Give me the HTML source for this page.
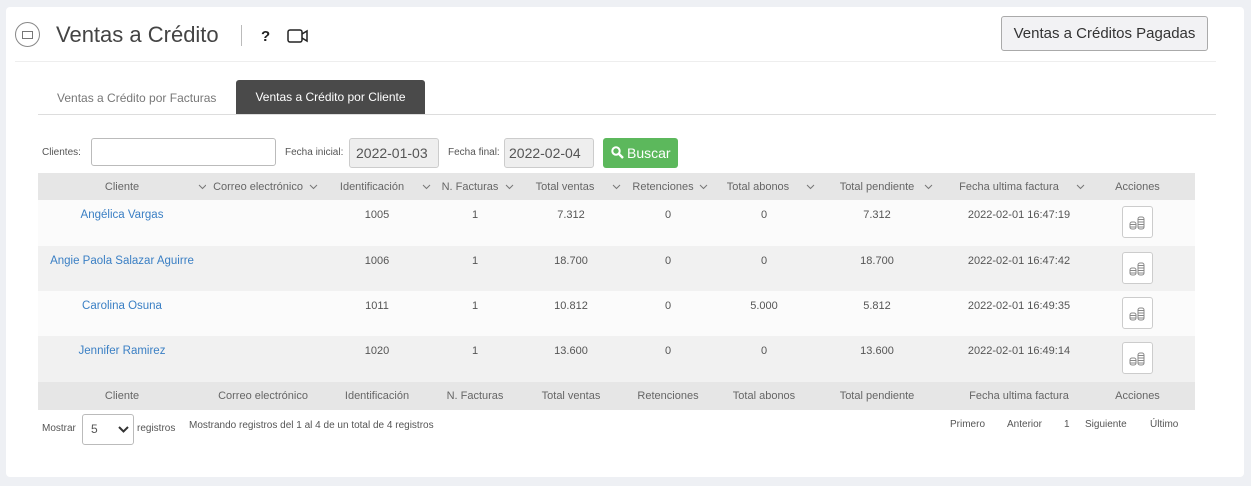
<!DOCTYPE html><html><head><meta charset="utf-8"><style>
*{box-sizing:border-box;margin:0;padding:0}
body{width:1251px;height:486px;background:#eef0f4;font-family:"Liberation Sans",sans-serif;color:#555;position:relative;overflow:hidden}
.card{position:absolute;left:6px;top:7px;width:1238px;height:470px;background:#fff;border-radius:4px}
.a{position:absolute}
table{position:absolute;left:38px;top:173px;border-collapse:collapse;table-layout:fixed;width:1157px}
td{font-size:11px;text-align:center;color:#555;vertical-align:top;position:relative}
tr.h td{height:27px;vertical-align:middle;background:#e6e6e6;color:#666}
tr.r td{padding-top:9px}
tr.o td{background:#fbfbfb}tr.e td{background:#f1f1f1}
.n{color:#3a7fc4;font-size:11.5px}
.btn{display:inline-block;width:31px;height:32px;border:1px solid #ccc;border-radius:3px;background:#fff;margin-top:-3px;margin-left:-23px;padding-top:9px}
.cv{position:absolute;top:9px;width:9px;height:9px}
.p{position:absolute;top:419px;font-size:10px}
</style></head><body>
<div class="card"></div>
<div class="a" style="left:15px;top:22px;width:25px;height:25px;border:1px solid #888;border-radius:50%"></div>
<div class="a" style="left:22px;top:31px;width:11px;height:8px;border:1px solid #777"></div>
<div class="a" style="left:56px;top:22px;font-size:22px;color:#444">Ventas a Crédito</div>
<div class="a" style="left:241px;top:25px;width:1px;height:21px;background:#bbb"></div>
<div class="a" style="left:261px;top:28px;font-size:15px;font-weight:bold;color:#222">?</div>
<svg class="a" style="left:287px;top:28px" width="22" height="16"><rect x="1" y="2" width="14" height="12" rx="2" fill="none" stroke="#222" stroke-width="1.5"/><path d="M15 6 L20 3 V13 L15 10" fill="none" stroke="#222" stroke-width="1.5"/></svg>
<div class="a" style="left:1001px;top:16px;width:207px;height:35px;border:1px solid #aaa;border-radius:3px;background:#f2f2f4;font-size:15px;color:#333;text-align:center;line-height:33px">Ventas a Créditos Pagadas</div>
<div class="a" style="left:15px;top:61px;width:1201px;height:1px;background:#eee"></div>
<div class="a" style="left:57px;top:91px;font-size:12px;color:#777">Ventas a Crédito por Facturas</div>
<div class="a" style="left:236px;top:80px;width:189px;height:35px;background:#4a4a4a;border-radius:3px 3px 0 0;color:#fff;font-size:12px;text-align:center;line-height:35px">Ventas a Crédito por Cliente</div>
<div class="a" style="left:38px;top:114px;width:1178px;height:1px;background:#ddd"></div>
<div class="a" style="left:42px;top:147px;font-size:10px">Clientes:</div>
<div class="a" style="left:91px;top:138px;width:185px;height:28px;border:1px solid #bbb;border-radius:3px"></div>
<div class="a" style="left:285px;top:147px;font-size:10px">Fecha inicial:</div>
<div class="a" style="left:349px;top:138px;width:90px;height:30px;border:1px solid #ccc;border-radius:3px;background:#eee;font-size:14px;line-height:28px;padding-left:6px">2022-01-03</div>
<div class="a" style="left:448px;top:147px;font-size:10px">Fecha final:</div>
<div class="a" style="left:504px;top:138px;width:90px;height:30px;border:1px solid #ccc;border-radius:3px;background:#eee;font-size:14px;line-height:28px;padding-left:4px">2022-02-04</div>
<div class="a" style="left:603px;top:138px;width:75px;height:30px;border-radius:3px;background:#5cb85c;color:#fff;font-size:14px;line-height:30px;padding-left:24px">Buscar</div>
<svg class="a" style="left:611px;top:146px" width="13" height="13"><circle cx="5" cy="5" r="3.7" fill="none" stroke="#fff" stroke-width="2"/><path d="M8 8 L12 12" stroke="#fff" stroke-width="2.4"/></svg>
<svg width="0" height="0" style="position:absolute"><defs><symbol id="c" viewBox="0 0 9 9"><path d="M1 3 L4.5 6.5 L8 3" fill="none" stroke="#777" stroke-width="1"/></symbol><symbol id="k" viewBox="0 0 16 14"><g fill="none" stroke="#888" stroke-width="1"><rect x="1" y="6" width="6" height="7" rx="2"/><path d="M1 8.5h6M1 11h6"/><rect x="9" y="1" width="6" height="12" rx="2"/><path d="M9 3.5h6M9 6h6M9 8.5h6M9 11h6"/></g></symbol></defs></svg>
<table>
<colgroup><col style="width:168px"><col style="width:114px"><col style="width:114px"><col style="width:82px"><col style="width:110px"><col style="width:84px"><col style="width:108px"><col style="width:118px"><col style="width:166px"><col style="width:93px"></colgroup>
<tr class="h"><td>Cliente<svg class="cv" style="left:160px"><use href="#c"/></svg></td><td style="padding-right:10px">Correo electrónico<svg class="cv" style="left:103px"><use href="#c"/></svg></td><td style="padding-right:10px">Identificación<svg class="cv" style="left:102px"><use href="#c"/></svg></td><td style="padding-right:10px">N. Facturas<svg class="cv" style="left:71px"><use href="#c"/></svg></td><td style="padding-right:12px">Total ventas<svg class="cv" style="left:96px"><use href="#c"/></svg></td><td style="padding-right:10px">Retenciones<svg class="cv" style="left:73px"><use href="#c"/></svg></td><td style="padding-right:12px">Total abonos<svg class="cv" style="left:96px"><use href="#c"/></svg></td><td style="padding-right:0">Total pendiente<svg class="cv" style="left:106px"><use href="#c"/></svg></td><td style="padding-right:20px">Fecha ultima factura<svg class="cv" style="left:140px"><use href="#c"/></svg></td><td style="padding-right:22px">Acciones</td></tr>
<tr class="r o" style="height:46px"><td class="n">Angélica Vargas</td><td></td><td>1005</td><td>1</td><td>7.312</td><td>0</td><td>0</td><td>7.312</td><td>2022-02-01 16:47:19</td><td><span class="btn"><svg width="16" height="14"><use href="#k"/></svg></span></td></tr>
<tr class="r e" style="height:45px"><td class="n">Angie Paola Salazar Aguirre</td><td></td><td>1006</td><td>1</td><td>18.700</td><td>0</td><td>0</td><td>18.700</td><td>2022-02-01 16:47:42</td><td><span class="btn"><svg width="16" height="14"><use href="#k"/></svg></span></td></tr>
<tr class="r o" style="height:45px"><td class="n">Carolina Osuna</td><td></td><td>1011</td><td>1</td><td>10.812</td><td>0</td><td>5.000</td><td>5.812</td><td>2022-02-01 16:49:35</td><td><span class="btn"><svg width="16" height="14"><use href="#k"/></svg></span></td></tr>
<tr class="r e" style="height:46px"><td class="n">Jennifer Ramirez</td><td></td><td>1020</td><td>1</td><td>13.600</td><td>0</td><td>0</td><td>13.600</td><td>2022-02-01 16:49:14</td><td><span class="btn"><svg width="16" height="14"><use href="#k"/></svg></span></td></tr>
<tr class="h" style="height:28px"><td>Cliente</td><td>Correo electrónico</td><td>Identificación</td><td>N. Facturas</td><td>Total ventas</td><td>Retenciones</td><td>Total abonos</td><td>Total pendiente</td><td>Fecha ultima factura</td><td style="padding-right:22px">Acciones</td></tr>
</table>
<div class="a" style="left:42px;top:423px;font-size:10px">Mostrar</div>
<div class="a" style="left:82px;top:414px;width:52px;height:31px;border:1px solid #bbb;border-radius:3px;font-size:12px;line-height:29px;padding-left:8px">5</div>
<svg class="a" style="left:118px;top:424px" width="11" height="10"><path d="M1 3 L5.5 7.5 L10 3" fill="none" stroke="#333" stroke-width="2"/></svg>
<div class="a" style="left:137px;top:423px;font-size:10px">registros</div>
<div class="a" style="left:189px;top:420px;font-size:10px">Mostrando registros del 1 al 4 de un total de 4 registros</div>
<div class="p" style="left:950px">Primero</div><div class="p" style="left:1007px">Anterior</div><div class="p" style="left:1064px">1</div><div class="p" style="left:1085px">Siguiente</div><div class="p" style="left:1150px">Último</div>
</body></html>
